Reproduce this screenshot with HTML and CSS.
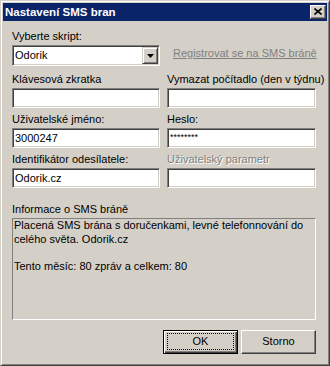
FILE: index.html
```html
<!DOCTYPE html>
<html lang="cs">
<head>
<meta charset="utf-8">
<title>Nastavení SMS bran</title>
<link rel="stylesheet" href="styles.css">
</head>
<body>
<div class="window">
  <div class="titlebar">
    <span class="title">Nastavení SMS bran</span>
    <span class="close"><svg width="8" height="7" viewBox="0 0 8 7"><path d="M0.5 0.5 L7.5 6.5 M7.5 0.5 L0.5 6.5" stroke="#000" stroke-width="1.6" fill="none"/></svg></span>
  </div>
  <div class="content">
    <div class="fields">
      <div class="field first">
        <div class="label">Vyberte skript:</div>
        <div class="combo">
          <span class="combo-text">Odorik</span>
          <span class="drop"><svg width="7" height="4" viewBox="0 0 7 4"><path d="M0 0 H7 L3.5 4 Z" fill="#000"/></svg></span>
        </div>
      </div>
      <div class="field linkcell"><span class="link">Registrovat se na SMS bráně</span></div>

      <div class="field">
        <div class="label">Klávesová zkratka</div>
        <div class="input"></div>
      </div>
      <div class="field">
        <div class="label">Vymazat počítadlo (den v týdnu)</div>
        <div class="input"></div>
      </div>

      <div class="field">
        <div class="label">Uživatelské jméno:</div>
        <div class="input">3000247</div>
      </div>
      <div class="field">
        <div class="label">Heslo:</div>
        <div class="input password">********</div>
      </div>

      <div class="field">
        <div class="label">Identifikátor odesílatele:</div>
        <div class="input">Odorik.cz</div>
      </div>
      <div class="field">
        <div class="label disabled">Uživatelský parametr</div>
        <div class="input"></div>
      </div>
    </div>

    <div class="info">
      <div class="label">Informace o SMS bráně</div>
      <div class="infobox">Placená SMS brána s doručenkami, levné telefonnování do celého světa. Odorik.cz<br><br>Tento měsíc: 80 zpráv a celkem: 80</div>
    </div>

    <div class="buttons">
      <div class="btn default"><span class="focus">OK</span></div>
      <div class="btn">Storno</div>
    </div>
  </div>
</div>
</body>
</html>
```

FILE: styles.css
```css
* { box-sizing: border-box; }
html, body { margin: 0; padding: 0; background: #d4d0c8; }
body {
  font-family: "Liberation Sans", Arial, sans-serif;
  font-size: 11px;
  line-height: 13px;
  color: #000;
}
.window {
  width: 330px;
  height: 366px;
  background: #d4d0c8;
  border: 1px solid;
  border-color: #d4d0c8 #404040 #404040 #d4d0c8;
  box-shadow: inset 1px 1px #fff, inset -1px -1px #808080;
  padding: 2px;
  display: flex;
  flex-direction: column;
}
.titlebar {
  height: 18px;
  background: #0a246a;
  display: flex;
  align-items: center;
  justify-content: space-between;
  padding: 0 1px 0 2px;
}
.title {
  color: #fff;
  font-weight: bold;
  font-size: 11.5px;
}
.close {
  width: 16px;
  height: 14px;
  background: #d4d0c8;
  border: 1px solid;
  border-color: #fff #404040 #404040 #fff;
  box-shadow: inset -1px -1px #808080;
  display: flex;
  align-items: center;
  justify-content: center;
  padding: 0 1px 1px 0;
}
.close svg { display: block; }
.content {
  padding: 9px 11px 0 9px;
  display: flex;
  flex-direction: column;
}
.fields {
  display: grid;
  grid-template-columns: 148px 149px;
  column-gap: 7px;
  row-gap: 5px;
}
.field { display: flex; flex-direction: column; }
.label { height: 13px; margin-bottom: 2px; white-space: nowrap; }
.label.disabled { color: #808080; text-shadow: 1px 1px 0 #fff; }
.linkcell { padding: 17px 0 0 6px; }
.link { color: #808080; text-decoration: underline; white-space: nowrap; }
.combo {
  height: 21px;
  margin-bottom: 2px;
  background: #fff;
  border: 1px solid;
  border-color: #808080 #fff #fff #808080;
  box-shadow: inset 1px 1px #404040, inset -1px -1px #d4d0c8;
  padding: 1px;
  display: flex;
  align-items: center;
  justify-content: space-between;
}
.combo-text { padding-left: 1px; line-height: 17px; }
.drop {
  width: 16px;
  height: 17px;
  background: #d4d0c8;
  border: 1px solid;
  border-color: #d4d0c8 #404040 #404040 #d4d0c8;
  box-shadow: inset 1px 1px #fff, inset -1px -1px #808080;
  display: flex;
  align-items: center;
  justify-content: center;
}
.drop svg { display: block; }
.input {
  height: 20px;
  background: #fff;
  border: 1px solid;
  border-color: #808080 #fff #fff #808080;
  box-shadow: inset 1px 1px #404040, inset -1px -1px #d4d0c8;
  padding: 2px 2px 0 2px;
  line-height: 15px;
  white-space: nowrap;
}
.input.password { font-size: 9px; line-height: 14px; padding-top: 1px; }
.info { margin-top: 15px; display: flex; flex-direction: column; }
.infobox {
  height: 102px;
  border: 1px solid;
  border-color: #808080 #fff #fff #808080;
  padding: 0 1px;
  line-height: 13.5px;
}
.buttons {
  margin-top: 10px;
  display: flex;
  justify-content: flex-end;
  gap: 3px;
}
.btn {
  width: 75px;
  height: 24px;
  border: 1px solid;
  border-color: #fff #404040 #404040 #fff;
  box-shadow: inset -1px -1px #808080;
  display: flex;
  align-items: center;
  justify-content: center;
  padding-bottom: 1px;
}
.btn.default {
  border-color: #000;
  box-shadow: inset 1px 1px #fff, inset -1px -1px #404040, inset -2px -2px #808080;
  padding: 2px 3px 3px 3px;
}
.focus {
  flex: 1;
  align-self: stretch;
  border: 1px dotted #000;
  display: flex;
  align-items: center;
  justify-content: center;
}
```
